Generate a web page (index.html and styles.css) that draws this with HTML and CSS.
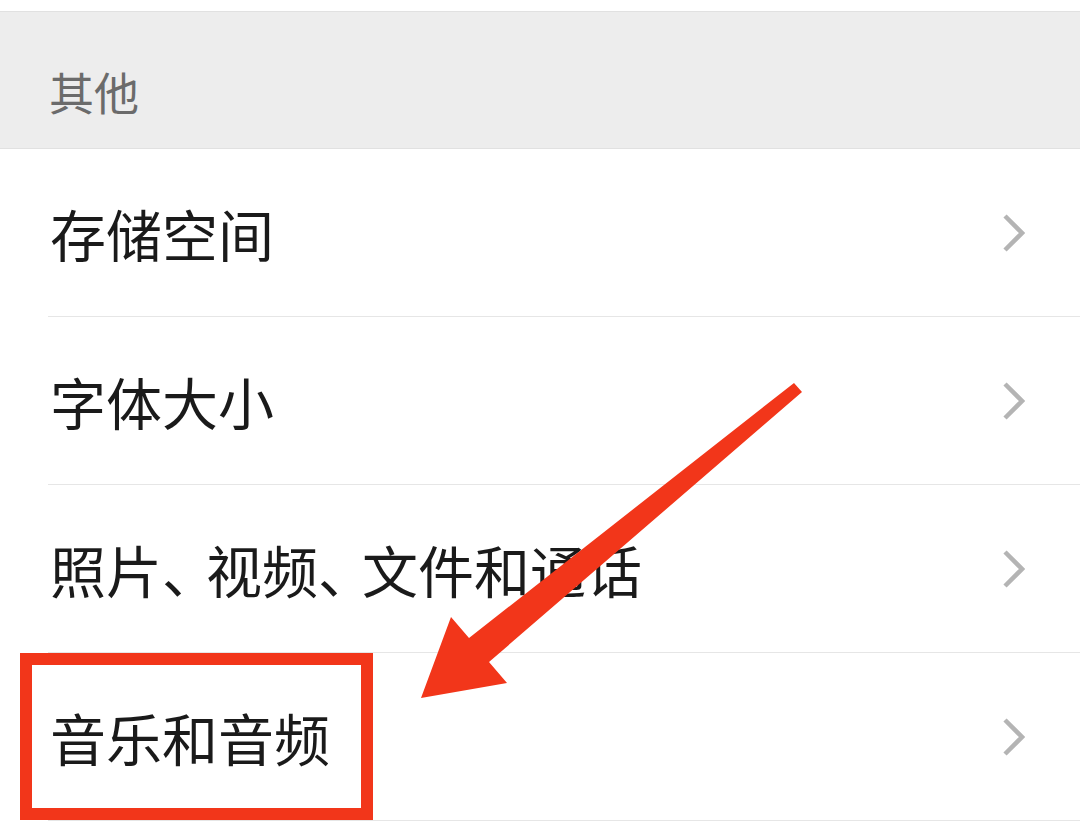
FILE: index.html
```html
<!DOCTYPE html>
<html lang="zh-CN">
<head>
    <meta charset="UTF-8">
    <meta name="viewport" content="width=device-width, initial-scale=1.0">
    <title>设置 - 其他</title>
    <link rel="stylesheet" href="styles.css">
</head>
<body>

    <div class="page">
        <div class="top-gap"></div>

        <div class="section-title">其他</div>

        <div class="list">
            <div class="list-item">
                <span class="item-label">存储空间</span>
                <svg class="chevron" width="22" height="38" viewBox="0 0 22 38">
                    <polyline points="2,2 19,19 2,36" />
                </svg>
            </div>
            <div class="list-item">
                <span class="item-label">字体大小</span>
                <svg class="chevron" width="22" height="38" viewBox="0 0 22 38">
                    <polyline points="2,2 19,19 2,36" />
                </svg>
            </div>
            <div class="list-item">
                <span class="item-label">照片<span class="punct">、</span>视频<span class="punct">、</span>文件和通话</span>
                <svg class="chevron" width="22" height="38" viewBox="0 0 22 38">
                    <polyline points="2,2 19,19 2,36" />
                </svg>
            </div>
            <div class="list-item">
                <span class="item-label">音乐和音频</span>
                <svg class="chevron" width="22" height="38" viewBox="0 0 22 38">
                    <polyline points="2,2 19,19 2,36" />
                </svg>
            </div>
        </div>

        <!-- annotation drawn over the screenshot -->
        <div class="highlight-box"></div>
        <svg class="arrow" width="1080" height="827" viewBox="0 0 1080 827">
            <polygon points="794,383 802,392 489,662 507,683 421,698 451,617 469,638" />
        </svg>
    </div>

</body>
</html>
```

FILE: styles.css
```css
body {
    margin: 0;
    padding: 0;
    background-color: #ffffff;
    font-family: "Noto Sans CJK SC", "Noto Sans", sans-serif;
}

.page {
    position: relative;
    width: 1080px;
    height: 827px;
    overflow: hidden;
}

.top-gap {
    height: 11px;
}

.section-title {
    height: 138px;
    box-sizing: border-box;
    padding: 52px 0 0 49px;
    background-color: #ededed;
    border-top: 1px solid #e1e1e1;
    border-bottom: 1px solid #e1e1e1;
    color: #6b6b6b;
    font-size: 45px;
    line-height: 56px;
}

.list-item {
    display: flex;
    align-items: center;
    justify-content: space-between;
    height: 167px;
    margin-left: 48px;
    padding-right: 55px;
    border-bottom: 1px solid #e6e6e6;
}

.item-label {
    padding-left: 2px;
    color: #1a1a1a;
    font-size: 56px;
    line-height: 1;
    white-space: nowrap;
}

.punct {
    font-feature-settings: "halt" 1;
    margin-right: 16px;
}

.chevron polyline {
    fill: none;
    stroke: #b4b4b4;
    stroke-width: 4.5;
}

.highlight-box {
    position: absolute;
    left: 20px;
    top: 653px;
    width: 353px;
    height: 167px;
    box-sizing: border-box;
    border: 12px solid #f2361a;
}

.arrow {
    position: absolute;
    left: 0;
    top: 0;
}

.arrow polygon {
    fill: #f2361a;
}
```
